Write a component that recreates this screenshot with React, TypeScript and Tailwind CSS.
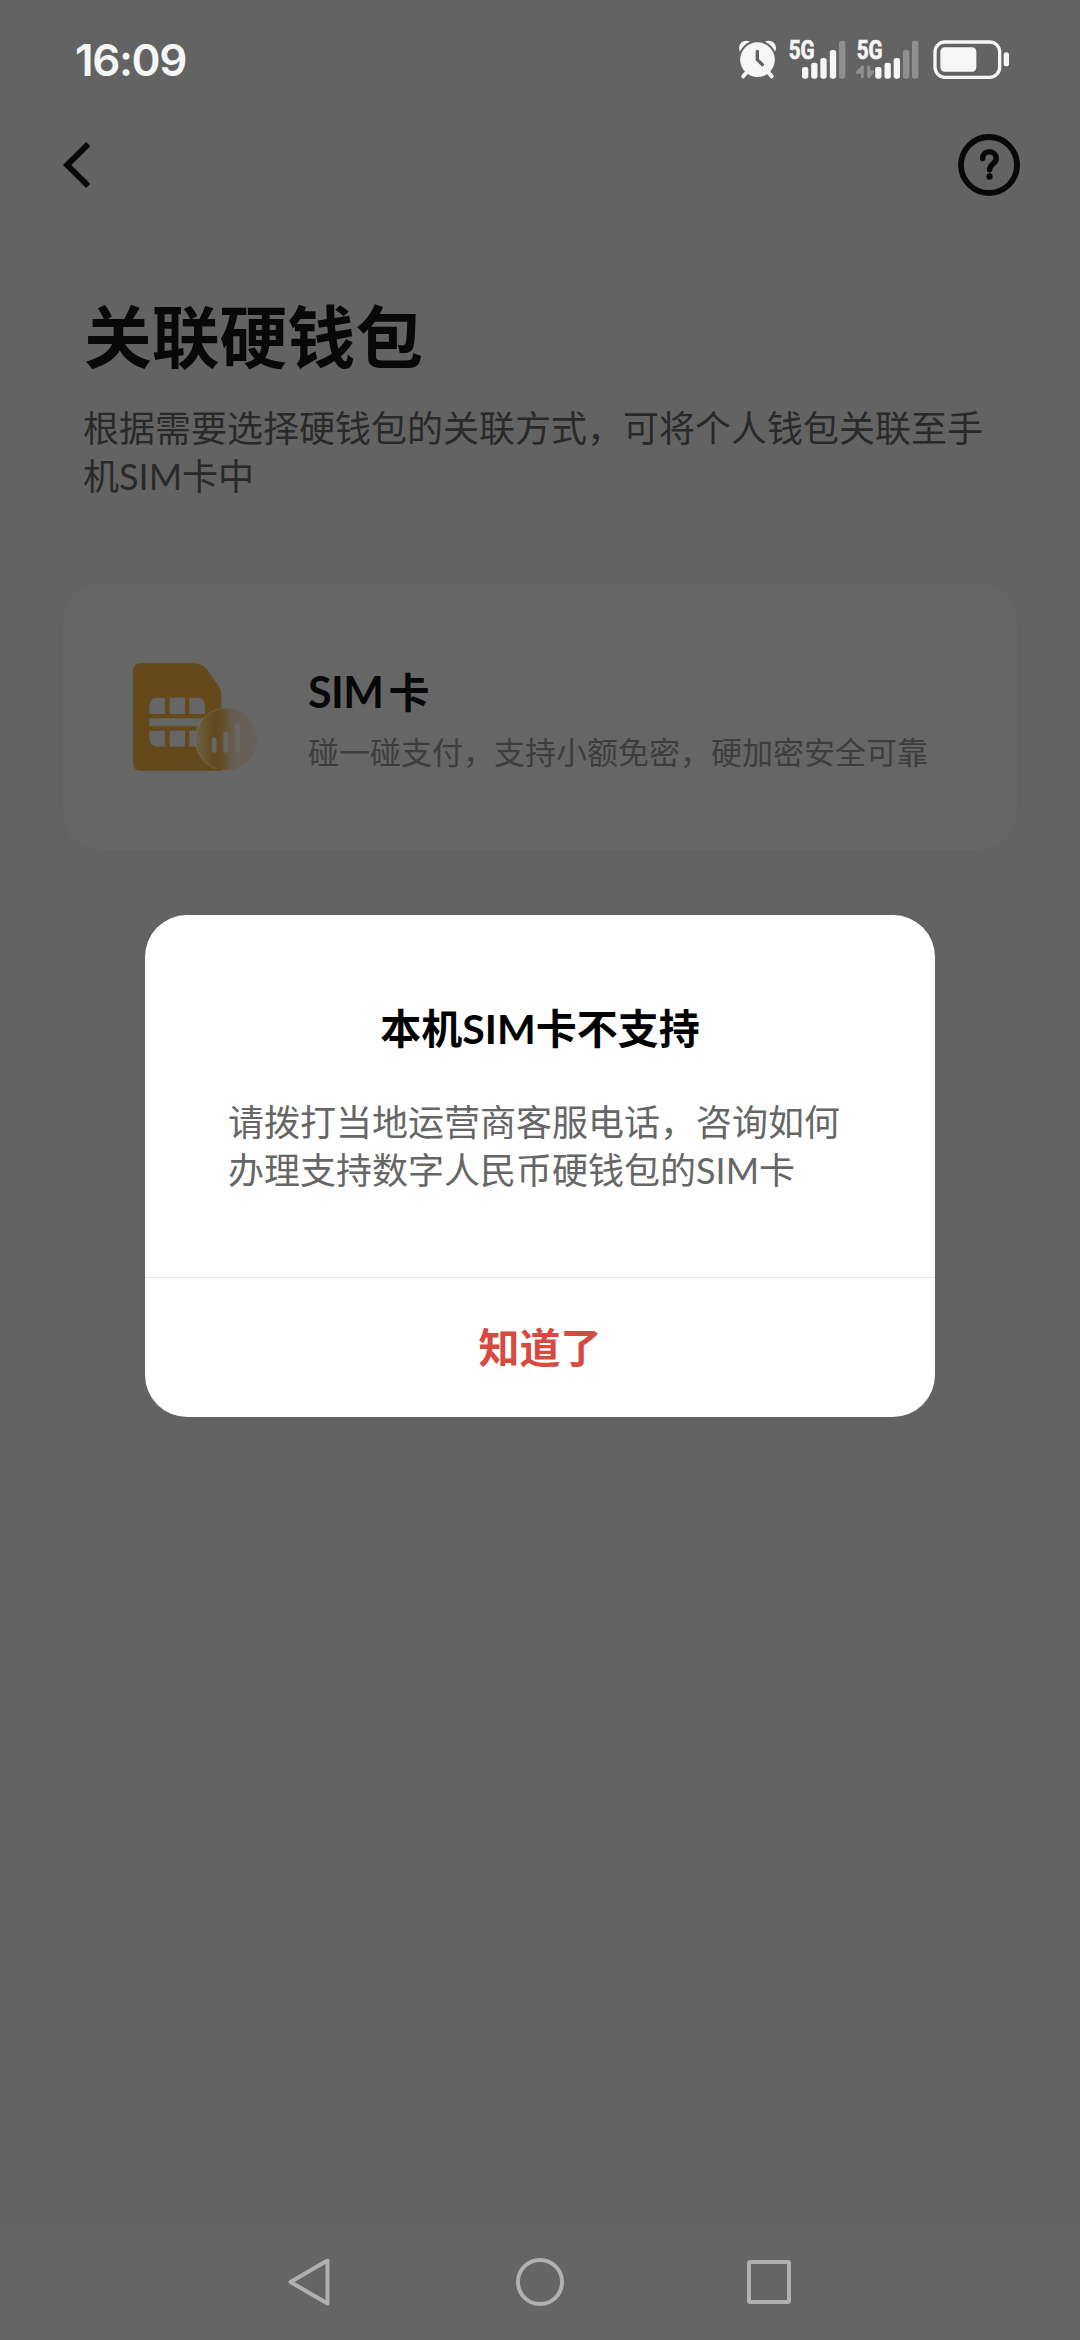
import React from 'react'

const BARS_A = [
  { x: 246, y: 141, on: true },
  { x: 273.5, y: 128, on: true },
  { x: 301, y: 114, on: true },
  { x: 329.5, y: 90, on: true },
  { x: 357, y: 62, on: false }
]

const BARS_B = [
  { x: 465.5, y: 141, on: true },
  { x: 493.5, y: 128, on: true },
  { x: 521, y: 114, on: true },
  { x: 549, y: 90, on: false },
  { x: 576, y: 62, on: false }
]

function Bars({ items }: { items: typeof BARS_A }) {
  return (
    <>
      {items.map((bar) => (
        <rect
          key={bar.x}
          x={bar.x}
          y={bar.y}
          width="19"
          height={176 - bar.y}
          rx="7"
          fill={bar.on ? '#f6f6f6' : '#909090'}
        />
      ))}
    </>
  )
}

function NetworkLabel({ x }: { x: number }) {
  return (
    <text
      x={x}
      y="118"
      fontSize="76"
      fontWeight="700"
      fontFamily="Roboto, sans-serif"
      textLength="78"
      lengthAdjust="spacingAndGlyphs"
      fill="#f6f6f6"
      stroke="#f6f6f6"
      strokeWidth="2"
    >
      5G
    </text>
  )
}

function StatusBar() {
  return (
    <div className="flex h-[120px] shrink-0 items-start pt-10 pl-[75px] pr-[70px]">
      <span className="mt-[-7px] font-['Inter',sans-serif] text-[44px] leading-[54px] font-semibold tracking-[-1.4px] text-[#f6f6f6]">
        16:09
      </span>
      <div className="ml-auto flex items-start">
        {/* alarm */}
        <svg className="h-[39px] w-[39px]" viewBox="54 60 117 117">
          <circle cx="79" cy="84" r="22" fill="#f6f6f6" />
          <circle cx="146" cy="84" r="22" fill="#f6f6f6" />
          <circle cx="112.500" cy="119" r="58" fill="#636363" />
          <path d="M84 152 70 169M141 152 155 169" stroke="#f6f6f6" strokeWidth="12" strokeLinecap="round" />
          <circle cx="112.500" cy="119" r="52" fill="#f6f6f6" />
          <path d="M112 94v25l15 15" fill="none" stroke="#636363" strokeWidth="10" strokeLinecap="round" strokeLinejoin="round" />
        </svg>
        <svg className="ml-[11px] h-10 w-[58px] overflow-visible" viewBox="204 60 174 120">
          <NetworkLabel x={206} />
          <Bars items={BARS_A} />
        </svg>
        <svg className="ml-[9px] h-10 w-16 overflow-visible" viewBox="405 60 192 120">
          <NetworkLabel x={410} />
          <path d="M427 141v29M428 141 412 157H427M446 141v29M446 170 458 155H446" fill="none" stroke="#909090" strokeWidth="9" strokeLinecap="round" strokeLinejoin="round" />
          <Bars items={BARS_B} />
        </svg>
        <svg className="ml-[14px] h-10 w-[77px]" viewBox="639 60 231 120">
          <rect x="645" y="66" width="194" height="106" rx="30" fill="none" stroke="#f6f6f6" strokeWidth="10" />
          <rect x="661" y="82" width="108" height="73" rx="13" fill="#f6f6f6" />
          <rect x="851" y="97" width="16" height="42" rx="8" fill="#f6f6f6" />
        </svg>
      </div>
    </div>
  )
}

function SimIcon() {
  return (
    <svg className="h-[108px] w-[125px] shrink-0" viewBox="250 277 375 324">
      <defs>
        <linearGradient id="badge" x1="437" x2="622" y1="0" y2="0" gradientUnits="userSpaceOnUse">
          <stop offset="0" stopColor="#686159" />
          <stop offset="0.12" stopColor="#695830" />
          <stop offset="0.3" stopColor="#614a20" />
          <stop offset="0.42" stopColor="#634d25" />
          <stop offset="0.6" stopColor="#665d50" />
          <stop offset="1" stopColor="#68615b" />
        </linearGradient>
        <linearGradient id="sim" x1="0" x2="1" y1="0" y2="1">
          <stop offset="0" stopColor="#66491b" />
          <stop offset="1" stopColor="#62491b" />
        </linearGradient>
      </defs>
      <path
        d="M274 278H432Q458 278 474 299L507 347Q515 359 515 374V600H274Q250 600 250 576V302Q250 278 274 278Z"
        fill="url(#sim)"
      />
      <g fill="#666666">
        <path d="M324 381H346V430H299V406Q299 381 324 381Z" />
        <path d="M360 381H406V430H360Z" />
        <path d="M419 381H441Q466 381 466 406V430H419Z" />
        <path d="M299 443H466V467H299Z" />
        <path d="M299 480H346V528H324Q299 528 299 503Z" />
        <path d="M360 480H406V528H360Z" />
        <path d="M419 480H466V528H419Z" />
      </g>
      <circle cx="529.500" cy="506" r="93" fill="url(#badge)" />
      <path d="M515 414A93 93 0 0 0 500 594" fill="none" stroke="#7d705c" strokeWidth="2" />
      <g fill="#696663">
        <rect x="486" y="500" width="15" height="46" rx="7.500" />
        <rect x="521" y="483" width="15" height="63" rx="7.500" />
        <rect x="556" y="459" width="15" height="87" rx="7.500" />
      </g>
    </svg>
  )
}

function Dialog() {
  return (
    <div className="absolute inset-x-0 top-[915px] flex justify-center">
      <div className="flex h-[502px] w-[790px] flex-col rounded-[42px] bg-white">
        <h2 className="mt-[81px] h-[60px] text-center text-[41px] leading-[60px] font-bold text-black">
          本机<span className="font-['Lato',sans-serif] leading-none">SIM</span>卡不支持
        </h2>
        <p className="mt-[40px] ml-[83px] text-[36px] leading-[48px] whitespace-nowrap text-[#666666]">
          请拨打当地运营商客服电话，咨询如何
          <br />
          办理支持数字人民币硬钱包的<span className="font-['Lato',sans-serif] leading-none">SIM</span>卡
        </p>
        <button className="mt-auto flex h-[140px] items-center justify-center border-t border-[#e5e5e5] pb-1.5 text-[41px] leading-[60px] font-bold text-[#d64a40]">
          知道了
        </button>
      </div>
    </div>
  )
}

export default function App() {
  return (
    <div className="relative flex h-[2340px] w-[1080px] flex-col overflow-hidden bg-[#636363] font-['Noto_Sans_CJK_SC',sans-serif]" lang="zh-CN">
      <StatusBar />

      <div className="flex h-[90px] shrink-0 items-center justify-between pr-[60px] pl-[62px]">
        <svg className="h-12 w-7" viewBox="0 0 28 48" fill="none" stroke="#080808" strokeWidth="6">
          <path d="M26.200 3 5.200 24l21 21" />
        </svg>
        <svg className="h-[62px] w-[62px]" viewBox="0 0 62 62" fill="none" stroke="#080808">
          <circle cx="31" cy="31" r="28" strokeWidth="5.800" />
          <path d="M24.600 24.500a6.800 6.800 0 0 1 13.600 0c0 5-6.600 5.500-6.600 11.300" strokeWidth="5.500" strokeLinecap="round" />
          <circle cx="31.500" cy="42.500" r="3.200" fill="#080808" stroke="none" />
        </svg>
      </div>

      <div className="px-[83px] pt-[74px]">
        <h1 className="ml-px h-[100px] text-[67.800px] leading-[100px] font-bold text-[#080808]">关联硬钱包</h1>
        <p className="mt-[18px] h-24 text-[36px] leading-[48px] whitespace-nowrap text-[#292929]">
          根据需要选择硬钱包的关联方式，可将个人钱包关联至手
          <br />
          机<span className="font-['Lato',sans-serif] leading-none">SIM</span>卡中
        </p>
      </div>

      <div className="mx-[63px] mt-[85px] flex h-[267px] shrink-0 items-center rounded-[36px] bg-[#666666] pl-[70px]">
        <SimIcon />
        <div className="ml-[50px]">
          <h3 className="h-[60px] text-[41px] leading-[60px] font-bold text-[#080808]">
            <span className="font-['Lato',sans-serif] text-[43px] leading-none tracking-[-0.5px]">SIM</span>
            <span className="ml-[5px]">卡</span>
          </h3>
          <p className="mt-2 text-[31px] leading-[46px] whitespace-nowrap text-[#3d3d3d]">
            碰一碰支付，支持小额免密，硬加密安全可靠
          </p>
        </div>
      </div>

      {/* system navigation */}
      <div className="mt-auto flex h-[116px] shrink-0 items-center justify-center bg-[#656565]">
        <svg className="h-12 w-[504px]" viewBox="0 0 504 48" fill="none" stroke="#b0b0b0" strokeWidth="4" strokeLinejoin="round">
          <path d="M2.500 24 39.500 2.500V45.500Z" />
          <circle cx="252" cy="24" r="22" />
          <rect x="461" y="4" width="40" height="40" rx="1" />
        </svg>
      </div>

      <Dialog />
    </div>
  )
}
